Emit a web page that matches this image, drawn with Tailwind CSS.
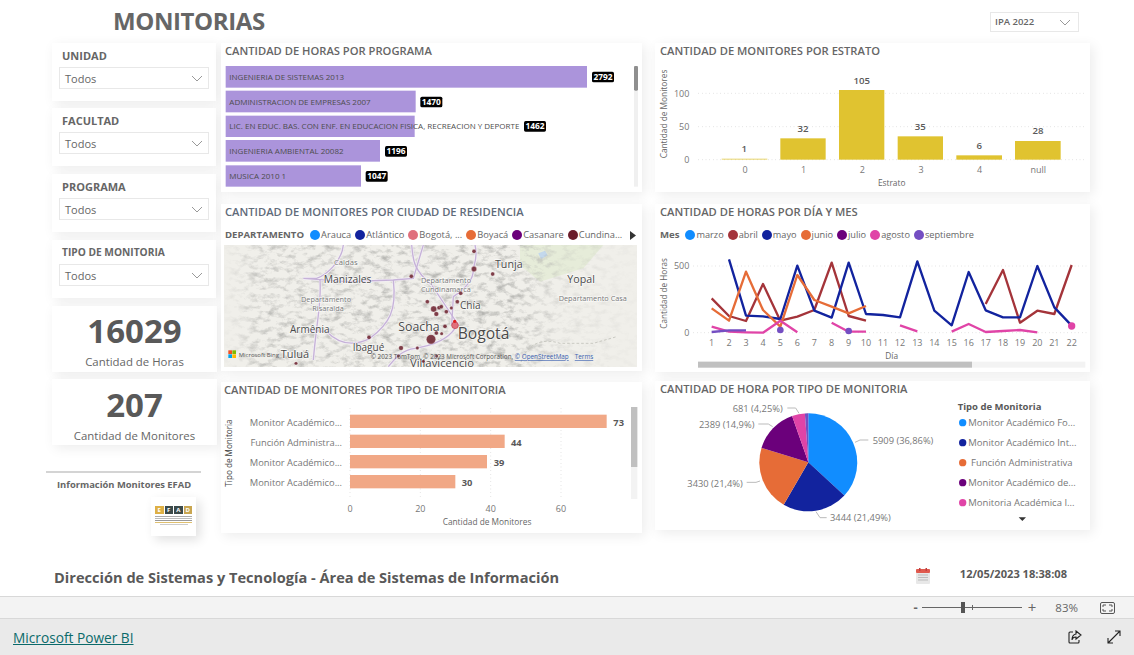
<!DOCTYPE html>
<html lang="es">
<head>
    <meta charset="UTF-8">
    <meta name="viewport" content="width=device-width, initial-scale=1.0">
    <title>Monitorias - Power BI</title>
    <script src="https://cdn.jsdelivr.net/npm/@tailwindcss/browser@4"></script>
</head>
<body class="w-[1134px] h-[655px] overflow-hidden bg-white flex flex-col font-['Open_Sans',sans-serif] text-[#666]">

    <!-- Reporte -->
    <div class="h-[596px] flex flex-col">
        <!-- Encabezado -->
        <div class="h-[43px] flex items-start">
            <h1 class="ml-[113px] mt-[5px] text-[24px] leading-[32px] font-bold text-[#666] tracking-[-0.4px]">MONITORIAS</h1>
            <div class="ml-auto mr-[55px] mt-[12px] w-[89px] h-[20px] border border-[#e8e8e8] flex items-center justify-between pl-[4px] pr-[7px] text-[9.5px] font-semibold text-[#666]">
                <span>IPA 2022</span>
                <svg width="12" height="7" viewBox="0 0 12 7" fill="none" stroke="#999"><path d="M1 1l5 5 5-5"/></svg>
            </div>
        </div>

        <div class="flex items-start">
            <!-- Filtros -->
            <div class="ml-[46px] w-[171px] flex flex-col">
                <div class="ml-[6px] w-[164px] h-[58px] bg-white shadow-[3px_3px_12px_rgba(0,0,0,0.08)] px-[7px] pt-[4px]">
                    <div class="pl-[3px] text-[11px] leading-[18px] font-bold">UNIDAD</div>
                    <div class="mt-[2px] h-[22px] border border-[#e8e8e8] flex items-center justify-between pl-[5px] pr-[5px] text-[11px]">
                        <span class="mt-[2px]">Todos</span>
                        <svg width="12" height="7" viewBox="0 0 12 7" fill="none" stroke="#999"><path d="M1 1l5 5 5-5"/></svg>
                    </div>
                </div>
                <div class="ml-[6px] mt-[7px] w-[164px] h-[58px] bg-white shadow-[3px_3px_12px_rgba(0,0,0,0.08)] px-[7px] pt-[4px]">
                    <div class="pl-[3px] text-[11px] leading-[18px] font-bold">FACULTAD</div>
                    <div class="mt-[2px] h-[22px] border border-[#e8e8e8] flex items-center justify-between pl-[5px] pr-[5px] text-[11px]">
                        <span class="mt-[2px]">Todos</span>
                        <svg width="12" height="7" viewBox="0 0 12 7" fill="none" stroke="#999"><path d="M1 1l5 5 5-5"/></svg>
                    </div>
                </div>
                <div class="ml-[6px] mt-[8px] w-[164px] h-[58px] bg-white shadow-[3px_3px_12px_rgba(0,0,0,0.08)] px-[7px] pt-[4px]">
                    <div class="pl-[3px] text-[11px] leading-[18px] font-bold">PROGRAMA</div>
                    <div class="mt-[2px] h-[22px] border border-[#e8e8e8] flex items-center justify-between pl-[5px] pr-[5px] text-[11px]">
                        <span class="mt-[2px]">Todos</span>
                        <svg width="12" height="7" viewBox="0 0 12 7" fill="none" stroke="#999"><path d="M1 1l5 5 5-5"/></svg>
                    </div>
                </div>
                <div class="ml-[6px] mt-[8px] w-[164px] h-[58px] bg-white shadow-[3px_3px_12px_rgba(0,0,0,0.08)] px-[7px] pt-[4px]">
                    <div class="pl-[3px] text-[10.2px] leading-[16px] font-bold">TIPO DE MONITORIA</div>
                    <div class="mt-[4px] h-[22px] border border-[#e8e8e8] flex items-center justify-between pl-[5px] pr-[5px] text-[11px]">
                        <span class="mt-[2px]">Todos</span>
                        <svg width="12" height="7" viewBox="0 0 12 7" fill="none" stroke="#999"><path d="M1 1l5 5 5-5"/></svg>
                    </div>
                </div>

                <!-- Tarjetas -->
                <div class="ml-[6px] mt-[8px] w-[165px] h-[66px] bg-white shadow-[3px_3px_12px_rgba(0,0,0,0.08)] flex flex-col items-center">
                    <div class="text-[33px] leading-[44px] font-bold text-[#595959] mt-[3px]">16029</div>
                    <div class="text-[11.4px] leading-[16px] mt-[1px]">Cantidad de Horas</div>
                </div>
                <div class="ml-[6px] mt-[7px] w-[165px] h-[66px] bg-white shadow-[3px_3px_12px_rgba(0,0,0,0.08)] flex flex-col items-center">
                    <div class="text-[33px] leading-[44px] font-bold text-[#595959] mt-[4px]">207</div>
                    <div class="text-[11.4px] leading-[16px] mt-[1px]">Cantidad de Monitores</div>
                </div>

                <!-- Enlace EFAD -->
                <div class="mt-[26px] w-[155px] border-t-2 border-[#d4d4d4] pt-[5px] pl-[11px] text-[9.4px] leading-[14px] font-bold whitespace-nowrap">Información Monitores EFAD</div>
                <div class="ml-[105px] mt-[5px] w-[45px] h-[39px] bg-white shadow-[4px_4px_10px_rgba(0,0,0,0.12)] flex flex-col items-center pt-[9px]">
                    <div class="flex gap-[1px] text-[6px] leading-[8px] font-bold text-white">
                        <span class="w-[8.5px] h-[8px] bg-[#deb045] text-center">E</span>
                        <span class="w-[8.5px] h-[8px] bg-[#3b4a4a] text-center">F</span>
                        <span class="w-[8.5px] h-[8px] bg-[#3b4a4a] text-center">A</span>
                        <span class="w-[8.5px] h-[8px] bg-[#c9a650] text-center">D</span>
                    </div>
                    <div class="mt-[2px] w-[37px] h-[1px] bg-[#aaa]"></div>
                    <div class="mt-[1px] w-[37px] h-[1px] bg-[#bbb]"></div>
                    <div class="mt-[1px] w-[37px] h-[1px] bg-[#999]"></div>
                    <div class="mt-[1px] w-[37px] h-[1px] bg-[#e0c070]"></div>
                    <div class="mt-[1px] w-[28px] h-[1px] bg-[#ccc]"></div>
                </div>
            </div>

            <!-- Columna central -->
            <div class="ml-[4px] w-[421px] flex flex-col">
                <!-- Horas por programa -->
                <div class="h-[149px] bg-white shadow-[3px_3px_12px_rgba(0,0,0,0.08)]">
                    <div class="pl-[4px] h-[23px] text-[11.2px] leading-[16px] font-semibold">CANTIDAD DE HORAS POR PROGRAMA</div>
                    <svg class="block" width="421" height="126" viewBox="3 78 1263 378">
                        <g fill="#ab94db">
                            <rect x="17" y="78" width="1084" height="65"/>
                            <rect x="17" y="152" width="570" height="65"/>
                            <rect x="17" y="227" width="567" height="64"/>
                            <rect x="17" y="300" width="463" height="65"/>
                            <rect x="17" y="376" width="406" height="64"/>
                        </g>
                        <g class="text-[24px] fill-[#4d4d4d]">
                            <text x="28" y="119">INGENIERIA DE SISTEMAS 2013</text>
                            <text x="28" y="194">ADMINISTRACION DE EMPRESAS 2007</text>
                            <text x="28" y="267">LIC. EN EDUC. BAS. CON ENF. EN EDUCACION FISICA, RECREACION Y DEPORTE</text>
                            <text x="28" y="341">INGENIERIA AMBIENTAL 20082</text>
                            <text x="28" y="416">MUSICA 2010 1</text>
                        </g>
                        <g fill="#000">
                            <rect x="1116" y="95" width="66" height="32" rx="5"/>
                            <rect x="601" y="170" width="66" height="32" rx="5"/>
                            <rect x="912" y="243" width="66" height="32" rx="5"/>
                            <rect x="495" y="318" width="66" height="32" rx="5"/>
                            <rect x="437" y="393" width="66" height="32" rx="5"/>
                        </g>
                        <g class="text-[25px] font-bold fill-white" text-anchor="middle">
                            <text x="1149" y="120">2792</text>
                            <text x="634" y="195">1470</text>
                            <text x="945" y="268">1462</text>
                            <text x="528" y="343">1196</text>
                            <text x="470" y="418">1047</text>
                        </g>
                        <rect x="1242" y="78" width="12" height="362" fill="#f0f0f0"/>
                        <rect x="1242" y="78" width="12" height="74" rx="4" fill="#8f8f8f"/>
                    </svg>
                </div>

                <!-- Monitores por ciudad -->
                <div class="mt-[12px] h-[167px] bg-white shadow-[3px_3px_12px_rgba(0,0,0,0.08)]">
                    <div class="pl-[4px] h-[21px] text-[11.2px] leading-[16px] font-semibold text-[#5f6b7a]">CANTIDAD DE MONITORES POR CIUDAD DE RESIDENCIA</div>
                    <div class="pl-[4px] pr-[4px] h-[20px] flex items-center gap-[4px] text-[9.3px] whitespace-nowrap">
                        <span class="font-bold text-[9.6px] mr-[2px]">DEPARTAMENTO</span>
                        <span class="flex items-center gap-[1px]"><i class="w-[10px] h-[10px] rounded-full bg-[#118dff]"></i>Arauca</span>
                        <span class="flex items-center gap-[1px]"><i class="w-[10px] h-[10px] rounded-full bg-[#12239e]"></i>Atlántico</span>
                        <span class="flex items-center gap-[1px]"><i class="w-[10px] h-[10px] rounded-full bg-[#e0707c]"></i>Bogotá, ...</span>
                        <span class="flex items-center gap-[1px]"><i class="w-[10px] h-[10px] rounded-full bg-[#e66c37]"></i>Boyacá</span>
                        <span class="flex items-center gap-[1px]"><i class="w-[10px] h-[10px] rounded-full bg-[#6b007b]"></i>Casanare</span>
                        <span class="flex items-center gap-[1px]"><i class="w-[10px] h-[10px] rounded-full bg-[#6b1d2a]"></i>Cundina...</span>
                        <svg class="ml-auto mr-[2px]" width="6" height="9" viewBox="0 0 6 9"><path d="M0 0l6 4.5L0 9z" fill="#333"/></svg>
                    </div>
                    <svg class="block ml-[3px]" width="413" height="122" viewBox="12 135 1239 366">
                        <defs>
                            <filter id="relieve" x="0" y="0" width="100%" height="100%">
                                <feTurbulence type="fractalNoise" baseFrequency="0.035 0.06" numOctaves="6" seed="7"/>
                                <feColorMatrix type="matrix" values="0 0 0 0 0.45  0 0 0 0 0.45  0 0 0 0 0.43  2.6 0 0 0 -1.2"/>
                            </filter>
                            <linearGradient id="franja" x1="0" x2="1" y1="0" y2="0">
                                <stop offset="0" stop-color="#fff" stop-opacity="0.05"/>
                                <stop offset="0.1" stop-color="#fff" stop-opacity="0.8"/>
                                <stop offset="0.7" stop-color="#fff" stop-opacity="1"/>
                                <stop offset="0.82" stop-color="#fff" stop-opacity="0.3"/>
                                <stop offset="1" stop-color="#fff" stop-opacity="0.05"/>
                            </linearGradient>
                            <mask id="zona"><rect x="12" y="135" width="1239" height="366" fill="url(#franja)"/></mask>
                        </defs>
                        <rect x="12" y="135" width="1239" height="366" fill="#f0efea"/>
                        <path d="M900 135h250l-60 70-130 40-60-50z" fill="#e6ecd9"/>
                        <path d="M955 160l20-8 8 14-20 12z" fill="#c3d8ec"/>
                        <g mask="url(#zona)"><rect x="12" y="135" width="1239" height="366" filter="url(#relieve)"/></g>
                        <!-- Vias -->
                        <g fill="none" stroke="#f4f0f6" stroke-width="8">
                            <path d="M370 135c-5 50-50 90-80 100h-40l130 10 140-5 60-5 30-100"/>
                            <path d="M520 240c10 90-10 130-70 175-60 30-100 10-130-20l-60-5"/>
                            <path d="M300 240c5 70-10 120-20 240"/>
                            <path d="M575 135c5 40 0 70 60 120l60 90 20 30"/>
                            <path d="M765 135c10 40-5 60-5 75 0 30-30 60-60 80l-5 85"/>
                            <path d="M705 385c-20 30-60 50-120 60-40 5-60 30-80 55"/>
                        </g>
                        <g fill="none" stroke="#c6b2d8" stroke-width="4">
                            <path d="M370 135c-5 50-50 90-80 100h-40l130 10 140-5 60-5 30-100"/>
                            <path d="M520 240c10 90-10 130-70 175-60 30-100 10-130-20l-60-5"/>
                            <path d="M300 240c5 70-10 120-20 240"/>
                            <path d="M575 135c5 40 0 70 60 120l60 90 20 30"/>
                            <path d="M765 135c10 40-5 60-5 75 0 30-30 60-60 80l-5 85"/>
                            <path d="M705 385c-20 30-60 50-120 60-40 5-60 30-80 55"/>
                        </g>
                        <path d="M900 500c10-60 60-90 120-70l100 0 70-20" fill="none" stroke="#c9c9c2" stroke-width="3" stroke-dasharray="8 6"/>
                        <!-- Ciudades -->
                        <g class="fill-[#4a4a4a]" stroke="#fff" stroke-opacity="0.7" stroke-width="4" paint-order="stroke">
                            <text x="342" y="195" class="text-[23px] fill-[#777]">Caldas</text>
                            <text x="311" y="250" class="text-[31px]">Manizales</text>
                            <text x="243" y="306" class="text-[22px] fill-[#777]">Departamento</text>
                            <text x="277" y="333" class="text-[22px] fill-[#777]">Risaralda</text>
                            <text x="210" y="400" class="text-[30px]">Armênia</text>
                            <text x="398" y="452" class="text-[30px]">Ibagué</text>
                            <text x="182" y="474" class="text-[33px]">Tuluá</text>
                            <text x="603" y="250" class="text-[22px] fill-[#777]">Departamento</text>
                            <text x="603" y="277" class="text-[22px] fill-[#777]">Cundinamarca</text>
                            <text x="825" y="205" class="text-[32px]">Tunja</text>
                            <text x="1042" y="250" class="text-[32px]">Yopal</text>
                            <text x="1016" y="304" class="text-[22px] fill-[#777]">Departamento Casa</text>
                            <text x="720" y="327" class="text-[30px]">Chía</text>
                            <text x="535" y="392" class="text-[37px]">Soacha</text>
                            <text x="713" y="417" class="text-[47px]">Bogotá</text>
                            <text x="570" y="500" class="text-[34px]">Villavicencio</text>
                        </g>
                        <!-- Burbujas -->
                        <g fill="#6b1d2a" fill-opacity="0.85" stroke="#fff" stroke-opacity="0.5" stroke-width="1.5">
                            <circle cx="762" cy="154" r="6"/><circle cx="762" cy="207" r="8"/><circle cx="818" cy="222" r="6"/>
                            <circle cx="574" cy="229" r="6"/><circle cx="722" cy="280" r="6"/><circle cx="712" cy="305" r="6"/>
                            <circle cx="622" cy="305" r="6"/><circle cx="641" cy="327" r="9"/><circle cx="657" cy="323" r="6"/>
                            <circle cx="664" cy="320" r="6"/><circle cx="694" cy="324" r="5"/><circle cx="679" cy="335" r="6"/>
                            <circle cx="649" cy="342" r="7"/><circle cx="675" cy="379" r="6"/><circle cx="649" cy="399" r="6"/>
                            <circle cx="665" cy="401" r="5"/><circle cx="633" cy="418" r="14"/><circle cx="447" cy="412" r="6"/>
                            <circle cx="543" cy="444" r="7"/><circle cx="592" cy="444" r="5"/><circle cx="535" cy="468" r="5"/>
                            <circle cx="650" cy="468" r="5"/><circle cx="610" cy="484" r="5"/><circle cx="228" cy="490" r="5"/>
                        </g>
                        <circle cx="705" cy="376" r="10" fill="#e0707c" stroke="#c04050" stroke-width="2"/>
                        <circle cx="704" cy="364" r="5" fill="#e02020"/>
                        <!-- Atribucion -->
                        <g>
                            <rect x="25" y="451" width="11" height="11" fill="#f25022"/><rect x="37" y="451" width="11" height="11" fill="#7fba00"/>
                            <rect x="25" y="463" width="11" height="11" fill="#00a4ef"/><rect x="37" y="463" width="11" height="11" fill="#ffb900"/>
                            <text x="56" y="470" class="text-[18px] fill-[#555]">Microsoft Bing</text>
                        </g>
                        <text x="452" y="477" class="text-[19px] fill-[#555]">© 2023 TomTom, © 2023 Microsoft Corporation, <tspan fill="#3a5fb0" text-decoration="underline">© OpenStreetMap</tspan><tspan dx="18" fill="#3a5fb0" text-decoration="underline">Terms</tspan></text>
                    </svg>
                </div>

                <!-- Monitores por tipo -->
                <div class="mt-[11px] h-[151px] bg-white shadow-[3px_3px_12px_rgba(0,0,0,0.08)]">
                    <div class="pl-[3px] h-[16px] text-[11.2px] leading-[16px] font-semibold">CANTIDAD DE MONITORES POR TIPO DE MONITORIA</div>
                    <svg class="block" width="421" height="135" viewBox="3 60 1263 405">
                        <g stroke="#d8d8d8" stroke-width="3" stroke-dasharray="2 9">
                            <path d="M390 90v270M601 90v270M812 90v270M1023 90v270"/>
                        </g>
                        <g fill="#f1a886">
                            <rect x="390" y="110" width="770" height="40"/>
                            <rect x="390" y="170" width="464" height="40"/>
                            <rect x="390" y="231" width="411" height="40"/>
                            <rect x="390" y="291" width="316" height="40"/>
                        </g>
                        <g class="text-[28px] fill-[#777]" text-anchor="end">
                            <text x="366" y="144">Monitor Académico...</text>
                            <text x="366" y="204">Función Administra...</text>
                            <text x="366" y="264">Monitor Académico...</text>
                            <text x="366" y="324">Monitor Académico...</text>
                        </g>
                        <g class="text-[28px] font-bold fill-[#595959]">
                            <text x="1180" y="144">73</text>
                            <text x="873" y="204">44</text>
                            <text x="821" y="264">39</text>
                            <text x="725" y="324">30</text>
                        </g>
                        <rect x="1233" y="87" width="19" height="276" fill="#f3f3f3"/>
                        <rect x="1233" y="87" width="19" height="180" fill="#c0c0c0"/>
                        <g class="text-[27px] fill-[#777]" text-anchor="middle">
                            <text x="390" y="402">0</text><text x="601" y="402">20</text><text x="812" y="402">40</text><text x="1023" y="402">60</text>
                        </g>
                        <text x="801" y="440" text-anchor="middle" class="text-[25px] fill-[#666]">Cantidad de Monitores</text>
                        <text transform="translate(37 225) rotate(-90)" text-anchor="middle" class="text-[24.500px] fill-[#444]">Tipo de Monitoria</text>
                    </svg>
                </div>
            </div>

            <!-- Columna derecha -->
            <div class="ml-[13px] w-[435px] flex flex-col">
                <!-- Estrato -->
                <div class="h-[149px] bg-white shadow-[3px_3px_12px_rgba(0,0,0,0.08)]">
                    <div class="pl-[5px] h-[23px] text-[11.2px] leading-[16px] font-semibold">CANTIDAD DE MONITORES POR ESTRATO</div>
                    <svg class="block" width="435" height="126" viewBox="15 198 1305 378">
                        <g stroke="#d8d8d8" stroke-width="3" stroke-dasharray="2 9">
                            <path d="M145 280h1165M145 380h1165M145 479h1165"/>
                        </g>
                        <g fill="#e0c330">
                            <rect x="215" y="476" width="137" height="3" fill-opacity="0.7"/>
                            <rect x="391" y="415" width="136" height="64"/>
                            <rect x="567" y="270" width="136" height="209"/>
                            <rect x="743" y="409" width="136" height="70"/>
                            <rect x="919" y="466" width="137" height="13"/>
                            <rect x="1095" y="423" width="137" height="56"/>
                        </g>
                        <g class="text-[29px] font-semibold fill-[#595959]" text-anchor="middle">
                            <text x="283" y="456">1</text><text x="459" y="396">32</text><text x="635" y="252">105</text>
                            <text x="811" y="391">35</text><text x="988" y="448">6</text><text x="1164" y="402">28</text>
                        </g>
                        <g class="text-[27px] fill-[#777]" text-anchor="end">
                            <text x="118" y="290">100</text><text x="118" y="390">50</text><text x="118" y="489">0</text>
                        </g>
                        <g class="text-[27px] fill-[#777]" text-anchor="middle">
                            <text x="285" y="520">0</text><text x="461" y="520">1</text><text x="637" y="520">2</text>
                            <text x="813" y="520">3</text><text x="989" y="520">4</text><text x="1165" y="520">null</text>
                        </g>
                        <text x="725" y="557" text-anchor="middle" class="text-[25px] fill-[#666]">Estrato</text>
                        <text transform="translate(50 342) rotate(-90)" text-anchor="middle" class="text-[25px] fill-[#666]">Cantidad de Monitores</text>
                    </svg>
                </div>

                <!-- Horas por dia y mes -->
                <div class="mt-[12px] h-[168px] bg-white shadow-[3px_3px_12px_rgba(0,0,0,0.08)]">
                    <div class="pl-[5px] h-[21px] text-[11.2px] leading-[16px] font-semibold">CANTIDAD DE HORAS POR DÍA Y MES</div>
                    <div class="pl-[5px] h-[20px] flex items-center gap-[4px] text-[9.2px] whitespace-nowrap">
                        <span class="font-bold text-[9.6px] mr-[2px]">Mes</span>
                        <span class="flex items-center gap-[1px]"><i class="w-[10px] h-[10px] rounded-full bg-[#118dff]"></i>marzo</span>
                        <span class="flex items-center gap-[1px]"><i class="w-[10px] h-[10px] rounded-full bg-[#a4343a]"></i>abril</span>
                        <span class="flex items-center gap-[1px]"><i class="w-[10px] h-[10px] rounded-full bg-[#12239e]"></i>mayo</span>
                        <span class="flex items-center gap-[1px]"><i class="w-[10px] h-[10px] rounded-full bg-[#e66c37]"></i>junio</span>
                        <span class="flex items-center gap-[1px]"><i class="w-[10px] h-[10px] rounded-full bg-[#6b007b]"></i>julio</span>
                        <span class="flex items-center gap-[1px]"><i class="w-[10px] h-[10px] rounded-full bg-[#e044a7]"></i>agosto</span>
                        <span class="flex items-center gap-[1px]"><i class="w-[10px] h-[10px] rounded-full bg-[#744ec2]"></i>septiembre</span>
                    </div>
                    <svg class="block" width="435" height="127" viewBox="15 135 1305 381">
                        <g stroke="#d8d8d8" stroke-width="3" stroke-dasharray="2 9">
                            <path d="M130 198h1180M130 398h1180"/>
                        </g>
                        <g fill="none" stroke-width="7" stroke-linejoin="round">
                            <g stroke="#a4343a">
                                <path d="M185 295L237 348 288 363 339 252 391 362 442 350 493 330 545 188 596 348 648 362"/>
                                <path d="M1007 312L1059 210 1110 368 1162 332 1213 342 1265 195"/>
                            </g>
                            <path stroke="#12239e" d="M237 178L288 347 339 349 391 357 442 197 493 332 545 353 596 188 648 342 699 345 750 352 802 184 853 332 905 376 956 216 1007 331 1059 352 1110 352 1162 198 1213 322 1265 377"/>
                            <path stroke="#e66c37" d="M185 325L237 362 288 215 339 330 391 380 442 225 493 300 545 320 596 340 648 318"/>
                            <g stroke="#e044a7">
                                <path d="M185 380L237 395 288 397 339 398 391 362 442 397"/>
                                <path d="M545 368L596 395 648 395"/>
                                <path d="M750 376L802 394"/>
                                <path d="M905 395L956 372 1007 396 1059 393 1110 390 1162 397"/>
                            </g>
                            <path stroke="#744ec2" d="M185 396L237 391 288 391"/>
                        </g>
                        <circle cx="1265" cy="378" r="11" fill="#e044a7"/>
                        <circle cx="391" cy="390" r="10" fill="#744ec2"/>
                        <circle cx="596" cy="393" r="10" fill="#744ec2"/>
                        <g class="text-[27px] fill-[#777]" text-anchor="end">
                            <text x="118" y="208">500</text><text x="118" y="408">0</text>
                        </g>
                        <g class="text-[27px] fill-[#777]" text-anchor="middle">
                            <text x="185" y="438">1</text><text x="237" y="438">2</text><text x="288" y="438">3</text><text x="339" y="438">4</text>
                            <text x="391" y="438">5</text><text x="442" y="438">6</text><text x="493" y="438">7</text><text x="545" y="438">8</text>
                            <text x="596" y="438">9</text><text x="648" y="438">10</text><text x="699" y="438">11</text><text x="750" y="438">12</text>
                            <text x="802" y="438">13</text><text x="853" y="438">14</text><text x="905" y="438">15</text><text x="956" y="438">16</text>
                            <text x="1007" y="438">17</text><text x="1059" y="438">18</text><text x="1110" y="438">19</text><text x="1162" y="438">20</text>
                            <text x="1213" y="438">21</text><text x="1265" y="438">22</text>
                        </g>
                        <text x="725" y="476" text-anchor="middle" class="text-[25px] fill-[#666]">Día</text>
                        <text transform="translate(50 280) rotate(-90)" text-anchor="middle" class="text-[24.500px] fill-[#666]">Cantidad de Horas</text>
                        <rect x="144" y="485" width="1162" height="18" fill="#f3f3f3"/>
                        <rect x="144" y="485" width="822" height="18" fill="#c0c0c0"/>
                    </svg>
                </div>

                <!-- Hora por tipo -->
                <div class="mt-[9px] h-[149px] bg-white shadow-[3px_3px_12px_rgba(0,0,0,0.08)]">
                    <div class="pl-[5px] h-[17px] text-[11.2px] leading-[16px] font-semibold">CANTIDAD DE HORA POR TIPO DE MONITORIA</div>
                    <svg class="block" width="435" height="132" viewBox="15 69 1305 396">
                        <path d="M475 262L475 115A147 147 0 0 1 583 361.5Z" fill="#118dff"/>
                        <path d="M475 262L583 361.5A147 147 0 0 1 401 389Z" fill="#12239e"/>
                        <path d="M475 262L401 389A147 147 0 0 1 334.5 218.7Z" fill="#e66c37"/>
                        <path d="M475 262L334.5 218.7A147 147 0 0 1 426.3 123Z" fill="#6b007b"/>
                        <path d="M475 262L426.3 123A147 147 0 0 1 464.7 115.2Z" fill="#e044a7"/>
                        <path d="M475 262L464.7 115.2A147 147 0 0 1 475 115Z" fill="#744ec2"/>
                        <g fill="none" stroke="#bbb" stroke-width="3">
                            <path d="M615 202L630 195H655"/>
                            <path d="M498 410L510 428H530"/>
                            <path d="M290 322H318L330 318"/>
                            <path d="M325 147H355L368 155"/>
                            <path d="M412 99H437L447 115"/>
                        </g>
                        <g class="text-[28px] fill-[#777]">
                            <text x="668" y="207">5909 (36,86%)</text>
                            <text x="540" y="437">3444 (21,49%)</text>
                            <text x="112" y="336">3430 (21,4%)</text>
                            <text x="147" y="159">2389 (14,9%)</text>
                            <text x="248" y="111">681 (4,25%)</text>
                        </g>
                        <text x="923" y="104" class="text-[28.500px] font-bold fill-[#595959]">Tipo de Monitoria</text>
                        <circle cx="938" cy="143" r="11" fill="#118dff"/>
                        <circle cx="938" cy="203" r="11" fill="#12239e"/>
                        <circle cx="938" cy="263" r="11" fill="#e66c37"/>
                        <circle cx="938" cy="323" r="11" fill="#6b007b"/>
                        <circle cx="938" cy="383" r="11" fill="#e044a7"/>
                        <g class="text-[28.500px] fill-[#777]">
                            <text x="955" y="153">Monitor Académico Fo...</text>
                            <text x="955" y="213">Monitor Académico Int...</text>
                            <text x="963" y="273">Función Administrativa</text>
                            <text x="955" y="333">Monitor Académico de...</text>
                            <text x="955" y="393">Monitoria Académica I...</text>
                        </g>
                        <path d="M1106 427h22l-11 11z" fill="#333"/>
                    </svg>
                </div>
            </div>
        </div>

        <!-- Pie del reporte -->
        <div class="mt-auto h-[36px] flex items-start">
            <div class="ml-[54px] mt-[7px] text-[14.6px] leading-[20px] font-bold text-[#595959]">Dirección de Sistemas y Tecnología - Área de Sistemas de Información</div>
            <svg class="ml-auto mt-[8px]" width="14" height="16" viewBox="0 0 14 16">
                <rect y="1" width="14" height="15" rx="1" fill="#e8e8e8"/>
                <rect y="1" width="14" height="4" rx="1" fill="#e05a4e"/>
                <rect x="3" width="1.5" height="3" fill="#c04040"/><rect x="9.5" width="1.5" height="3" fill="#c04040"/>
                <path d="M2 7h10M2 9.5h10M2 12h10" stroke="#bbb"/>
            </svg>
            <div class="ml-[30px] mr-[67px] mt-[6px] text-[11.1px] leading-[16px] font-bold text-[#595959]">12/05/2023 18:38:08</div>
        </div>
    </div>

    <!-- Barra de zoom -->
    <div class="h-[23px] bg-[#f3f3f3] border-y border-[#d8d8d8] flex items-center justify-end text-[#666]">
        <span class="text-[13px] font-bold leading-none">-</span>
        <div class="relative ml-[4px] w-[100px] h-[1px] bg-[#666]">
            <span class="absolute left-[39px] top-[-5px] w-[4px] h-[11px] bg-[#555]"></span>
            <span class="absolute left-[50px] top-[-2px] w-[1px] h-[5px] bg-[#666]"></span>
        </div>
        <span class="ml-[6px] text-[15px] leading-none">+</span>
        <span class="ml-[19px] text-[11.5px]">83%</span>
        <svg class="ml-[22px] mr-[19px]" width="15" height="12" viewBox="0 0 15 12" fill="none" stroke="#555"><rect x=".5" y=".5" width="14" height="11" rx="1.5"/><path d="M3 5V3h3M9 3h3v2M12 7v2H9M6 9H3V7"/></svg>
    </div>

    <!-- Barra inferior -->
    <div class="flex-1 bg-[#eaeaea] flex items-center">
        <a href="#" class="ml-[13px] mt-[2px] text-[13.7px] text-[#0b6a6a] underline">Microsoft Power BI</a>
        <svg class="ml-auto" width="14" height="14" viewBox="0 0 14 14" fill="none" stroke="#222" stroke-width="1.1"><path d="M5 2H2a1 1 0 0 0-1 1v9a1 1 0 0 0 1 1h8a1 1 0 0 0 1-1v-2"/><path d="M8 1l5 4-5 4V7c-2 0-3.5.7-4 3 0-3.5 1.500-5.500 4-6z"/></svg>
        <svg class="ml-[25px] mr-[13px]" width="14" height="14" viewBox="0 0 14 14" fill="none" stroke="#222" stroke-width="1.1"><path d="M1 13L13 1M8 1h5v5M6 13H1V8"/></svg>
    </div>
</body>
</html>
